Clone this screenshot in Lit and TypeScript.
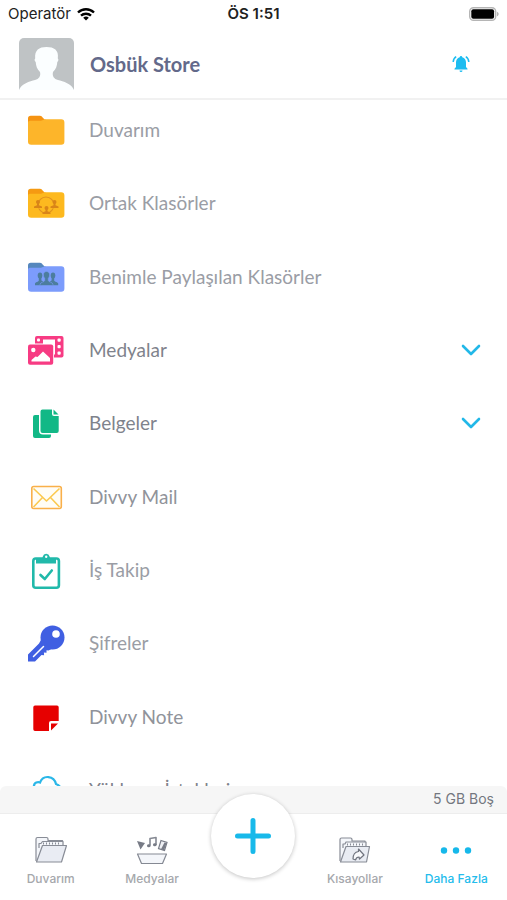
import { LitElement, html, svg, css, SVGTemplateResult, nothing } from "lit";
import { customElement, state } from "lit/decorators.js";

interface Entry {
  label: string;
  icon: SVGTemplateResult;
  tone?: "dark" | "mid";
  expandable?: boolean;
}

const folder = (body: string, tab: string, inner: unknown = nothing) => svg`
  <path fill=${tab} d="M4 17V8.500a2.800 2.800 0 0 1 2.800-2.800h9.200c2.400 0 3.400 3.800 5.500 3.800l2 4z"/>
  <path fill=${body} d="M4 12.500Q4 10.800 6 10.800h10c3 0 3-1.500 6-1.500h15.200a3.200 3.200 0 0 1 3.200 3.200v19a3.200 3.200 0 0 1-3.200 3.200H7.200A3.200 3.200 0 0 1 4 31.500z"/>
  ${inner}`;

const person = (x: number, y: number) => svg`
  <circle cx=${x} cy=${y} r="2"/>
  <path d="M${x - 1} ${y + 1}h2v2.200l3 1.200v1.600h-8v-1.600l3-1.200z"/>`;

const entries: Entry[] = [
  { label: "Duvarım", icon: folder("#fdb52a", "#f59312") },
  {
    label: "Ortak Klasörler",
    icon: folder(
      "#fdb91f",
      "#f59a12",
      svg`<circle cx="22" cy="22" r="8" fill="none" stroke="#e0901f" stroke-width="1.200"/>
        <g fill="#fdb91f"><circle cx="14.500" cy="22" r="3.500"/><circle cx="30" cy="22" r="3.500"/><circle cx="22" cy="27" r="3.500"/></g>
        <g fill="#d98518">${person(14, 19)}${person(30.500, 19)}${person(22.500, 25)}</g>`
    ),
  },
  {
    label: "Benimle Paylaşılan Klasörler",
    icon: folder(
      "#7c9cfc",
      "#5587bd",
      svg`<g fill="#4c7d9e">
        <ellipse cx="16" cy="18.500" rx="2.300" ry="2.900"/><ellipse cx="29" cy="18.500" rx="2.300" ry="2.900"/>
        <path d="M14.800 20h2.600v3.400l2 1.200-2 3.600H11v-1.600c0-1.600 3.800-1.800 3.800-3.200zM27.600 20h2.600v3.400c0 1.400 4 1.600 4 3.200v1.600h-6.400l-2-3.600 1.800-1.200z"/>
        <path stroke="#7c9cfc" stroke-width=".6" d="M22.500 14.500c2 0 3.100 1.500 3.100 3.400 0 1.400-.5 2.700-1.300 3.400v2.300c0 1.400 4.600 1.500 4.600 3.700v1.300H16.100v-1.300c0-2.200 4.600-2.300 4.600-3.700v-2.300c-.8-.7-1.300-2-1.300-3.400 0-1.900 1.100-3.400 3.100-3.400z"/></g>`
    ),
  },
  {
    label: "Medyalar",
    tone: "dark",
    expandable: true,
    icon: svg`<rect x="11" y="6" width="28.500" height="21.500" rx="2" fill="#f73b83"/>
      <g fill="#fff"><rect x="19" y="9.500" width="12" height="15"/>
      <rect x="13" y="8.500" width="3" height="3" rx="1"/><rect x="33.500" y="8.500" width="3.200" height="3.200" rx="1"/>
      <rect x="33.500" y="15" width="3.200" height="3.200" rx="1"/><rect x="33.500" y="21.500" width="3.200" height="3.200" rx="1"/></g>
      <rect x="3" y="13.500" width="27" height="22.500" rx="3" fill="#fff"/>
      <rect x="4" y="14.500" width="25.200" height="20.300" rx="2" fill="#f73b83"/>
      <circle cx="9.300" cy="20" r="2.200" fill="#fff"/>
      <path fill="#fff" d="M7.500 31.500v-1.500l4-3.500 2 .5 5.500-5.500 7 6.500v3.500z"/>`,
  },
  {
    label: "Belgeler",
    tone: "dark",
    expandable: true,
    icon: svg`<path fill="#12b886" d="M9 14a2 2 0 0 1 2-2h4v15.500a4 4 0 0 0 4 4h8v1.500a2 2 0 0 1-2 2H11a2 2 0 0 1-2-2z"/>
      <path fill="#12b886" d="M16.500 8.500a2 2 0 0 1 2-2H28v4.500a2 2 0 0 0 2 2h4.700v15a2 2 0 0 1-2 2H18.500a2 2 0 0 1-2-2z"/>
      <path fill="#12b886" d="M29.500 6.500l5 5h-5z"/>`,
  },
  {
    label: "Divvy Mail",
    tone: "mid",
    icon: svg`<rect x="7.800" y="9.500" width="29.500" height="22" rx="2" fill="#fffdf6" stroke="#f9b04a" stroke-width="1.600"/>
      <path fill="none" stroke="#fbc94f" stroke-width="1.600" stroke-linejoin="round" d="M9.500 11.500L22.500 24l13-12.500M9.500 30l9-9.500M35.500 30l-9-9.500"/>`,
  },
  {
    label: "İş Takip",
    icon: svg`<rect x="9.300" y="8.500" width="25.600" height="29.200" rx="2.500" fill="#fff" stroke="#21b9aa" stroke-width="2.600"/>
      <path fill="#21b9aa" d="M12 13.500V8.500h5.500c.8 0 1-.8 1.300-2a3.500 3.500 0 0 1 6.800 0c.3 1.200.5 2 1.300 2H32v5H14z"/>
      <circle cx="22.200" cy="6.700" r="1.200" fill="#fff"/>
      <path fill="none" stroke="#21b9aa" stroke-width="2.600" stroke-linecap="round" stroke-linejoin="round" d="M16.500 25l4.300 4 7-8.500"/>`,
  },
  {
    label: "Şifreler",
    icon: svg`<circle cx="28.500" cy="14.500" r="12" fill="#405fe2"/>
      <path fill="#405fe2" d="M17.500 16l10 10-3 1.500-2-.3v2.600l-2.600-.2.200 2.600-2.600-.2L11 38.500H4v-7L15 20.500z"/>
      <circle cx="32" cy="11" r="3.800" fill="#fff"/>
      <path stroke="#fff" stroke-width="1.500" stroke-linecap="round" d="M9.500 33.500l10-10"/>`,
  },
  {
    label: "Divvy Note",
    tone: "mid",
    icon: svg`<path fill="#e60000" d="M11 8.500h22a1.700 1.700 0 0 1 1.700 1.700V24H27a2 2 0 0 0-2 2v8H11a1.700 1.700 0 0 1-1.700-1.700V10.200A1.700 1.700 0 0 1 11 8.500z"/>
      <path fill="#e60000" d="M27 26.500h7l-7 7z"/>`,
  },
  {
    label: "Yükleme İstekleri",
    tone: "dark",
    icon: svg`<path fill="none" stroke="#2bb7e8" stroke-width="2.200" d="M14 29c-7 0-8-8-4-13 0-3.500 4-4.500 6-3.500 3-8 14-7 16 1.500 8 3 7 15 0 15z"/>`,
  },
];

const tabFolder = (inner: unknown = nothing) => svg`
  <g fill="#f4f6fa" stroke="#888c96" stroke-width="1.200" stroke-linejoin="round">
    <path d="M5 31V9q0-1.500 1.500-1.500h9q1.500 0 1.500 1.500v1.500h14.500v6"/>
    <path d="M8 18V13.500h2l1.500-2h20.500v5"/>
    <path d="M12 13.500h18" stroke-width="2" stroke-dasharray="1 2"/>
    <path fill="#e9ecf3" d="M5.500 32L11.500 15.500h24l-5 16.500z"/>
  </g>${inner}`;

const leftTabs = [
  { label: "Duvarım", icon: tabFolder() },
  {
    label: "Medyalar",
    icon: svg`<g fill="none" stroke="#858993" stroke-width="1.200" stroke-linejoin="round">
      <path fill="#f4f6fa" d="M5.500 24h29l-4 9.500h-21z"/>
      <path stroke-width="1.600" d="M18 15.500V8.500l6-1v7.500"/></g>
      <path fill="#777b86" d="M5 11l8 2-4.500 6.500zM15 16a1.800 1.500 0 1 0 3.600-.5A1.800 1.500 0 1 0 15 16zM21 15a1.800 1.500 0 1 0 3.600-.5A1.800 1.500 0 1 0 21 15z"/>
      <path fill="#eef0f4" stroke="#777b86" stroke-width="1.200" d="M29 10.500l6 2-2.500 8-6-2z"/><path fill="#777b86" d="M32.500 12.500l2 .7-2.500 7-3-1z"/>`,
  },
];
const rightTabs = [
  {
    label: "Kısayollar",
    icon: svg`<g fill="#f4f6fa" stroke="#888c96" stroke-width="1.200" stroke-linejoin="round">
        <path d="M5 31V9.500q0-1.500 1.500-1.500h9q1.500 0 1.500 1.500V11h13v6"/>
        <path d="M8 18v-4h2l1-2h20v5"/>
        <path d="M12 14.500h17" stroke-width="2" stroke-dasharray="1 2"/>
        <path fill="#e9ecf3" d="M5.500 32L11 16.500h23.500L31.500 32z"/>
        <path fill="#f8f9fc" stroke="#6f737e" d="M18 29c0-4 2-7 5.500-7.500v-2.500l5.500 6-4.500 4-.5-2c-2 0-3 1-3.500 3z"/>
      </g>`,
  },
  {
    label: "Daha Fazla",
    active: true,
    icon: svg`<g fill="#16b8ea"><circle cx="8" cy="20.500" r="3.200"/><circle cx="20" cy="20.500" r="3.200"/><circle cx="32" cy="20.500" r="3.200"/></g>`,
  },
];

@customElement("app-root")
export class AppRoot extends LitElement {
  static styles = css`
    :host {
      display: flex;
      flex-direction: column;
      height: 100vh;
      overflow: hidden;
      background: #fff;
      font-family: Lato, "Noto Sans", sans-serif;
      color: #9a9da5;
    }
    * { box-sizing: border-box; }
    button, a { font: inherit; color: inherit; text-decoration: none; }
    button { border: 0; padding: 0; background: none; cursor: pointer; }
    svg { display: block; flex: none; }
    .status {
      display: grid;
      grid-template-columns: 1fr auto 1fr;
      align-items: center;
      height: 28px;
      padding: 0 8px;
      font: 15px/20px Inter, "Liberation Sans", sans-serif;
      color: #222;
    }
    .carrier { display: flex; align-items: center; gap: 6px; }
    .time { font-weight: 600; }
    .battery { justify-self: end; }
    .profile {
      display: flex;
      align-items: center;
      height: 72px;
      padding: 2px 36px 0 19px;
      border-bottom: 2px solid #f1f1f1;
      flex: none;
    }
    .name {
      flex: 1;
      margin: 0 0 0 16px;
      font-size: 20px;
      line-height: 24px;
      font-weight: 700;
      color: #63698a;
    }
    .scroller {
      flex: 1;
      min-height: 0;
      overflow: hidden;
    }
    .list {
      height: calc(100% + 24px);
      margin: 0;
      padding: 10px 24px 0;
      list-style: none;
      display: flex;
      flex-direction: column;
      justify-content: space-between;
    }
    .row {
      display: flex;
      align-items: center;
      gap: 21px;
      width: 100%;
      height: 40px;
      font-size: 19px;
      line-height: 24px;
      text-align: left;
    }
    .mid { color: #90939a; }
    .dark { color: #7f838c; }
    .label { flex: 1; }
    .storage {
      flex: none;
      height: 28px;
      padding: 0 13px;
      border-bottom: 1px solid #ededed;
      border-radius: 6px 6px 0 0;
      background: #f6f6f6;
      font: 14px/26px Inter, sans-serif;
      text-align: right;
      color: #73777f;
    }
    .tabs {
      flex: none;
      display: grid;
      grid-template-columns: repeat(5, 1fr);
      height: 86px;
    }
    .tab {
      display: flex;
      flex-direction: column;
      align-items: center;
      padding-top: 16px;
      gap: 1px;
      font: 500 12px/16px Inter, sans-serif;
      color: #a6a8ac;
    }
    .active { color: #24bcec; }
    .add {
      position: relative;
      justify-self: center;
      margin-top: -20px;
      width: 84px;
      height: 84px;
      border-radius: 50%;
      background: #fff;
      box-shadow: 0 1px 4px rgba(0, 0, 0, 0.24);
      display: grid;
      place-items: center;
    }
  `;

  @state() private open = new Set<string>();

  private toggle(label: string) {
    const next = new Set(this.open);
    if (!next.delete(label)) next.add(label);
    this.open = next;
  }

  private row(e: Entry) {
    const body = html`<svg width="44" height="40" viewBox="0 0 44 40" aria-hidden="true">${e.icon}</svg>
      <span class="label">${e.label}</span>`;
    return html`<li>
      ${e.expandable
        ? html`<button class="row ${e.tone ?? ""}" aria-expanded=${this.open.has(e.label)} @click=${() => this.toggle(e.label)}>
            ${body}
            <svg width="24" height="16" viewBox="0 0 24 16" aria-hidden="true">
              <path d="M4 4l8 8 8-8" fill="none" stroke="#22b8e8" stroke-width="2.600" stroke-linecap="round" stroke-linejoin="round"/>
            </svg>
          </button>`
        : html`<a class="row ${e.tone ?? ""}" href="#">${body}</a>`}
    </li>`;
  }

  private tab(t: { label: string; icon: SVGTemplateResult; active?: boolean }) {
    return html`<a class="tab ${t.active ? "active" : ""}" href="#">
      <svg width="40" height="40" viewBox="0 0 40 40" aria-hidden="true">${t.icon}</svg>
      <span>${t.label}</span>
    </a>`;
  }

  render() {
    return html`
      <div class="status">
        <span class="carrier">
          Operatör
          <svg width="18" height="14" viewBox="0 0 18 14" aria-hidden="true">
            <g fill="none" stroke="#000" stroke-width="2.400">
              <path d="M1 5.500a11.500 11.500 0 0 1 16 0"/><path d="M4 8.700a7.300 7.300 0 0 1 10 0"/>
            </g>
            <path d="M9 13.500l-2.800-2.700a4 4 0 0 1 5.600 0z"/>
          </svg>
        </span>
        <span class="time">ÖS 1:51</span>
        <svg class="battery" width="30" height="14" viewBox="0 0 30 14" aria-hidden="true">
          <rect x=".7" y=".7" width="26" height="12.600" rx="3.800" fill="#fff" stroke="#b5b5b5" stroke-width="1.400"/>
          <rect x="2.300" y="2.200" width="22.800" height="9.600" rx="2"/>
          <path fill="#b5b5b5" d="M28 4.700c2.200.8 2.200 3.800 0 4.600z"/>
        </svg>
      </div>
      <header class="profile">
        <svg width="55" height="52" viewBox="0 0 55 52" role="img" aria-label="Profil">
          <path fill="#bfc3c5" d="M0 52V5a5 5 0 0 1 5-5h45a5 5 0 0 1 5 5v47z"/>
          <path fill="#fbfeff" d="M0 52c2-6 11-9 16-10 4-1 6-4 5-8-3-3-4-6-4.300-10-1.500-1-1.200-3-.5-3.500C15.500 12 20 9 27.500 9S40 12 38.800 20.500c.7.500 1 2.500-.5 3.500-.3 4-1.300 7-4.300 10-1 4 1 7 5 8 5 1 14 4 16 10z"/>
        </svg>
        <h1 class="name">Osbük Store</h1>
        <button aria-label="Bildirimler">
          <svg width="20" height="20" viewBox="0 0 20 20" aria-hidden="true">
            <path fill="#1cbcf0" d="M10 2c.8 0 1.200.6 1.300 1.300 2.500.6 3.700 2.700 3.700 5.200v4.500l1.500 1.700v.8h-13v-.8L5 13V8.500c0-2.500 1.200-4.600 3.700-5.200C8.800 2.600 9.200 2 10 2zM8.500 16.500h3a1.500 1.500 0 0 1-3 0z"/>
            <path fill="none" stroke="#1cbcf0" stroke-width="1.500" d="M2.200 8c.1-2.300 1.200-4.200 3-5.300M17.800 8c-.1-2.300-1.200-4.200-3-5.300"/>
          </svg>
        </button>
      </header>
      <main class="scroller">
        <ul class="list">${entries.map((e) => this.row(e))}</ul>
      </main>
      <div class="storage">5 GB Boş</div>
      <nav class="tabs">
        ${leftTabs.map((t) => this.tab(t))}
        <button class="add" aria-label="Ekle">
          <svg width="38" height="38" viewBox="0 0 38 38" aria-hidden="true">
            <path d="M19 3.500v31M3.500 19h31" stroke="#18b9ea" stroke-width="5" stroke-linecap="round"/>
          </svg>
        </button>
        ${rightTabs.map((t) => this.tab(t))}
      </nav>
    `;
  }
}
